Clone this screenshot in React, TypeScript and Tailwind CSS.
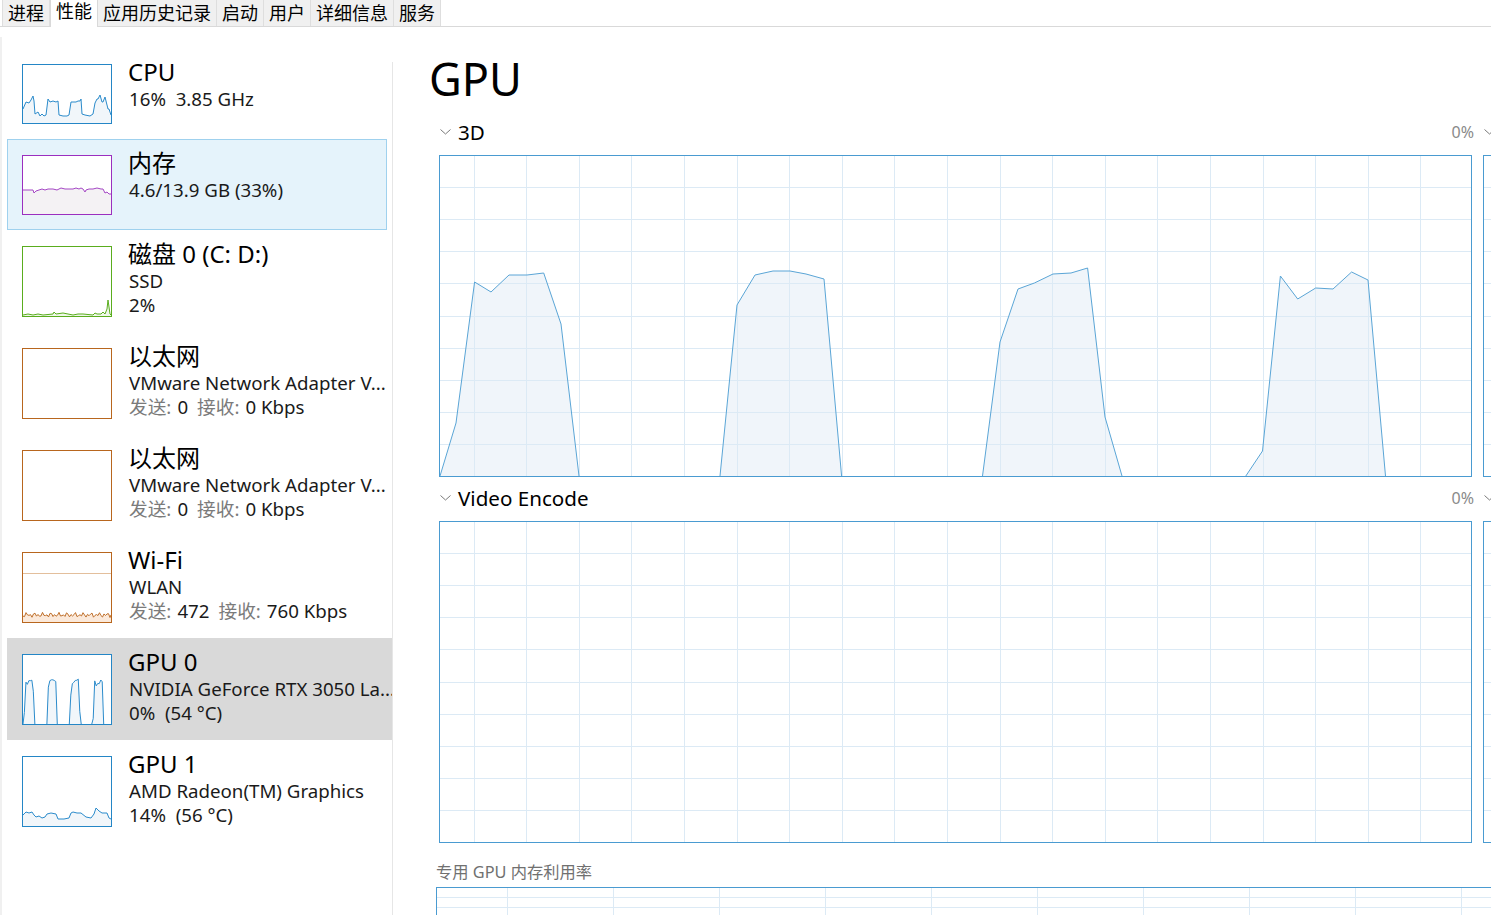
import React from "react";
import clsx from "clsx";

type Pt = [number, number];

const tabs = ["进程", "性能", "应用历史记录", "启动", "用户", "详细信息", "服务"];

// 3D engine samples, chart interior coords (1031 x 320)
const gpuPlateaus: Pt[][] = [
  [[0, 320], [16, 267], [34.6, 126], [51, 136], [69, 119], [87, 119], [103.7, 117], [121, 168], [139, 320]],
  [[280, 320], [297, 149], [315, 119], [333, 115], [350, 115], [366, 118], [384, 123], [401.6, 320]],
  [[542.5, 320], [560, 186], [578, 133], [594.4, 127], [613, 118], [631, 117], [647.6, 112], [665, 261], [682, 320]],
  [[805.8, 320], [822.5, 295], [840.4, 120], [857.7, 143], [875.7, 132], [893, 133], [911.6, 116], [928, 124], [945.5, 320]],
];

const cpuPts: Pt[] = [
  [0, 44], [3, 37], [6, 38], [8, 35], [10, 31], [11, 36], [12, 49], [15, 47], [17, 51], [19, 49], [21, 51], [23, 50],
  [25, 34], [27, 37], [30, 36], [33, 37], [35, 36], [36, 50], [40, 51], [44, 51], [46, 50], [48, 37], [50, 37],
  [53, 37], [55, 36], [57, 36], [58, 34], [59, 49], [62, 50], [67, 51], [70, 49], [72, 38], [74, 34], [75, 34],
  [77, 30], [79, 37], [80, 37], [82, 32], [85, 44], [86, 44], [88, 50],
];

const memPts: Pt[] = [
  [0, 34], [10, 34], [11, 37], [13, 35], [16, 34], [19, 33], [22, 34], [25, 33], [30, 33], [34, 34], [36, 33],
  [38, 32], [42, 33], [46, 33], [50, 33], [53, 32], [56, 33], [58, 32], [60, 33], [62, 36], [63, 34], [66, 33],
  [70, 33], [74, 32], [78, 33], [80, 33], [82, 37], [84, 36], [86, 38], [88, 38],
];

const diskPts: Pt[] = [
  [0, 68], [5, 67], [10, 68], [15, 67], [20, 68], [30, 67], [31, 65], [33, 67], [40, 66], [45, 67], [50, 68],
  [55, 67], [60, 67], [70, 68], [72, 66], [74, 67], [78, 67], [80, 65], [82, 67], [84, 62], [85, 53], [86, 60],
  [87, 67], [88, 68],
];

const gpu1Pts: Pt[] = [
  [0, 58], [3, 55], [6, 56], [9, 55], [11, 58], [13, 60], [16, 59], [19, 61], [22, 60], [24, 57], [28, 56], [33, 57],
  [35, 62], [41, 62], [46, 61], [48, 56], [50, 55], [54, 56], [58, 56], [63, 60], [68, 61], [71, 57], [73, 51],
  [76, 54], [79, 56], [84, 56], [86, 61], [88, 62],
];

const wifiPts: Pt[] = Array.from({ length: 60 }, (_, i) => {
  const x = i * 1.5;
  const y = 62 + Math.sin(i * 2.3) * 1.6 + Math.cos(i * 5.1) * 1.1;
  return [Math.min(x, 88), y] as Pt;
});

const gpu0Pts: Pt[][] = gpuPlateaus.map((p) => p.map(([x, y]) => [(x * 88) / 1031, (y * 69) / 320] as Pt));

const ptsStr = (p: Pt[]) => p.map(([x, y]) => `${x},${y}`).join(" ");

function Area({ pts, h, stroke, fill }: { pts: Pt[]; h: number; stroke: string; fill: string }) {
  const first = pts[0];
  const last = pts[pts.length - 1];
  return (
    <g>
      <polygon points={ptsStr([[first[0], h], ...pts, [last[0], h]])} fill={fill} />
      <polyline points={ptsStr(pts)} fill="none" stroke={stroke} strokeWidth={1} />
    </g>
  );
}

function Thumb({
  tall,
  border,
  className,
  children,
}: {
  tall?: boolean;
  border: string;
  className?: string;
  children?: React.ReactNode;
}) {
  return (
    <div className={clsx("w-[90px] shrink-0 border bg-white", tall ? "h-[71px]" : "h-[60px]", border, className)}>
      <svg width={88} height={tall ? 69 : 58} className="block">
        {children}
      </svg>
    </div>
  );
}

function Net({ send, recv }: { send: number; recv: number }) {
  return (
    <>
      <span className="text-[#7b7b7b]">发送:</span>
      <span className="ml-[6px]">{send}</span>
      <span className="ml-[9px] text-[#7b7b7b]">接收:</span>
      <span className="ml-[6px]">{recv} Kbps</span>
    </>
  );
}

function SideItem({
  title,
  lines,
  thumb,
  box,
  textClass = "mt-[9px]",
}: {
  title: string;
  lines: React.ReactNode[];
  thumb: React.ReactNode;
  box: string;
  textClass?: string;
}) {
  return (
    <div className={clsx("flex shrink-0 overflow-hidden", box)}>
      {thumb}
      <div className={clsx("ml-[16px] min-w-0 whitespace-nowrap", textClass)}>
        <div className="text-[24px] leading-[30px] text-black">{title}</div>
        {lines.map((l, i) => (
          <div key={i} className="ml-px text-[18.7px] leading-[24px] text-[#1a1a1a]">
            {l}
          </div>
        ))}
      </div>
    </div>
  );
}

function Chevron() {
  return (
    <svg width={11} height={6} className="block shrink-0">
      <polyline points="0.5,0.5 5.5,5 10.5,0.5" fill="none" stroke="#7a7a7a" strokeWidth={1} />
    </svg>
  );
}

function BigChart({ data }: { data?: Pt[][] }) {
  const W = 1031;
  const H = 320;
  const vlines = Array.from({ length: 20 }, (_, k) => Math.round(34.6 + k * 52.6) - 0.5).filter((x) => x < W);
  const hlines = Array.from({ length: 9 }, (_, k) => Math.round(32.1 * (k + 1)) - 0.5);
  return (
    <div className="ml-[3px] h-[322px] w-[1033px] shrink-0 border border-[#4a9bd1] bg-white">
      <svg width={W} height={H} className="block">
        {data?.map((p, i) => (
          <polygon key={"f" + i} points={ptsStr(p)} fill="#f0f5fa" />
        ))}
        {vlines.map((x) => (
          <line key={"v" + x} x1={x} x2={x} y1={0} y2={H} stroke="#dceaf5" />
        ))}
        {hlines.map((y) => (
          <line key={"h" + y} x1={0} x2={W} y1={y} y2={y} stroke="#dceaf5" />
        ))}
        {data?.map((p, i) => (
          <polyline key={"l" + i} points={ptsStr(p)} fill="none" stroke="#5aa5d6" strokeWidth={1} />
        ))}
      </svg>
    </div>
  );
}

function Section({ label, value, data }: { label?: string; value?: string; data?: Pt[][] }) {
  return (
    <div className="w-[1038px] shrink-0">
      <div className="flex h-[24px] items-center justify-between">
        <div className="flex items-center pl-[4px]">
          <Chevron />
          {label && <span className="ml-[7px] text-[20.6px] leading-[24px] text-black">{label}</span>}
        </div>
        {value && <span className="text-[16px] leading-[24px] text-[#8a8a8a]">{value}</span>}
      </div>
      <div className="mt-[11px]">
        <BigChart data={data} />
      </div>
    </div>
  );
}

function MemChart() {
  const vlines = Array.from({ length: 12 }, (_, k) => 70.5 + k * 106);
  const hlines = Array.from({ length: 6 }, (_, k) => 9.5 + k * 10);
  return (
    <div className="h-[60px] w-[1200px] shrink-0 border-t border-l border-[#4a9bd1]">
      <svg width={1200} height={60} className="block">
        {vlines.map((x) => (
          <line key={"v" + x} x1={x} x2={x} y1={0} y2={60} stroke="#dceaf5" />
        ))}
        {hlines.map((y) => (
          <line key={"h" + y} x1={0} x2={1200} y1={y} y2={y} stroke="#dceaf5" />
        ))}
      </svg>
    </div>
  );
}

export default function App() {
  const blue = "border-[#2486c6]";
  const orange = "border-[#b8661e]";
  return (
    <div className="h-[915px] w-full overflow-hidden bg-white font-['Noto_Sans','Noto_Sans_CJK_SC',sans-serif] text-black">
      {/* tab strip */}
      <div className="flex h-[27px] border-b border-[#d9d9d9] pl-[2px]">
        {tabs.map((t) =>
          t === "性能" ? (
            <div
              key={t}
              className="relative z-10 -mb-px h-[27px] border-x border-[#d9d9d9] bg-white px-[5px] pt-px text-[18px] leading-[20px]"
            >
              {t}
            </div>
          ) : (
            <div
              key={t}
              className="-ml-px h-[26px] border-x border-[#dedede] bg-[#f0f0f0] px-[5px] pt-[2px] text-[18px] leading-[22px] first:ml-0"
            >
              {t}
            </div>
          )
        )}
      </div>

      <div className="flex h-[888px]">
        {/* sidebar */}
        <div className="flex w-[393px] shrink-0">
          <div className="mt-[10px] w-[2px] bg-[#f0f0f0]" />
          <div className="ml-[5px] flex w-[385px] flex-col pt-[21px]">
            <SideItem
              box="h-[91px]"
              title="CPU"
              lines={["16%\u00a0 3.85 GHz"]}
              thumb={
                <Thumb border={blue} className="mt-[16px] ml-[15px]">
                  <Area pts={cpuPts} h={58} stroke="#2b8bcb" fill="#f1f6fa" />
                </Thumb>
              }
            />
            <SideItem
              box="h-[91px] w-[380px] border border-[#9fd1ee] bg-[#e5f3fb]"
              textClass="mt-[8px]"
              title="内存"
              lines={["4.6/13.9 GB (33%)"]}
              thumb={
                <Thumb border="border-[#9b2fbf]" className="mt-[15px] ml-[14px]">
                  <Area pts={memPts} h={58} stroke="#a446c4" fill="#f4f2f4" />
                </Thumb>
              }
            />
            <SideItem
              box="h-[102px]"
              title="磁盘 0 (C: D:)"
              lines={["SSD", "2%"]}
              thumb={
                <Thumb tall border="border-[#5aad1e]" className="mt-[16px] ml-[15px]">
                  <Area pts={diskPts} h={69} stroke="#5aad1e" fill="#eff7e9" />
                </Thumb>
              }
            />
            <SideItem
              box="h-[102px]"
              title="以太网"
              lines={["VMware Network Adapter V...", <Net send={0} recv={0} />]}
              thumb={<Thumb tall border={orange} className="mt-[16px] ml-[15px]" />}
            />
            <SideItem
              box="h-[102px]"
              title="以太网"
              lines={["VMware Network Adapter V...", <Net send={0} recv={0} />]}
              thumb={<Thumb tall border={orange} className="mt-[16px] ml-[15px]" />}
            />
            <SideItem
              box="h-[102px]"
              title="Wi-Fi"
              lines={["WLAN", <Net send={472} recv={760} />]}
              thumb={
                <Thumb tall border={orange} className="mt-[16px] ml-[15px]">
                  <line x1={0} x2={88} y1={20.5} y2={20.5} stroke="#e3bf9c" />
                  <Area pts={wifiPts} h={69} stroke="#bf6f2a" fill="#fbe9da" />
                </Thumb>
              }
            />
            <SideItem
              box="h-[102px] bg-[#d9d9d9]"
              title="GPU 0"
              lines={["NVIDIA GeForce RTX 3050 La...", "0%\u00a0 (54 °C)"]}
              thumb={
                <Thumb tall border={blue} className="mt-[16px] ml-[15px]">
                  {gpu0Pts.map((p, i) => (
                    <Area key={i} pts={p} h={69} stroke="#2b8bcb" fill="#f1f6fa" />
                  ))}
                </Thumb>
              }
            />
            <SideItem
              box="h-[102px]"
              title="GPU 1"
              lines={["AMD Radeon(TM) Graphics", "14%\u00a0 (56 °C)"]}
              thumb={
                <Thumb tall border={blue} className="mt-[16px] ml-[15px]">
                  <Area pts={gpu1Pts} h={69} stroke="#2b8bcb" fill="#f1f6fa" />
                </Thumb>
              }
            />
          </div>
          <div className="mt-[35px] w-px bg-[#e6e6e6]" />
        </div>

        {/* main panel */}
        <div className="min-w-0 flex-1 overflow-hidden pl-[43px] pt-[26px]">
          <h1 className="-ml-[7px] text-[45px] leading-[52px] text-black">GPU</h1>

          <div className="mt-[15px] flex gap-[6px]">
            <Section label="3D" value="0%" data={gpuPlateaus} />
            <Section />
          </div>

          <div className="mt-[9px] flex gap-[6px]">
            <Section label="Video Encode" value="0%" />
            <Section />
          </div>

          <div className="mt-[19px] text-[16.3px] leading-[20px] text-[#707070]">专用 GPU 内存利用率</div>
          <div className="mt-[5px]">
            <MemChart />
          </div>
        </div>
      </div>
    </div>
  );
}
